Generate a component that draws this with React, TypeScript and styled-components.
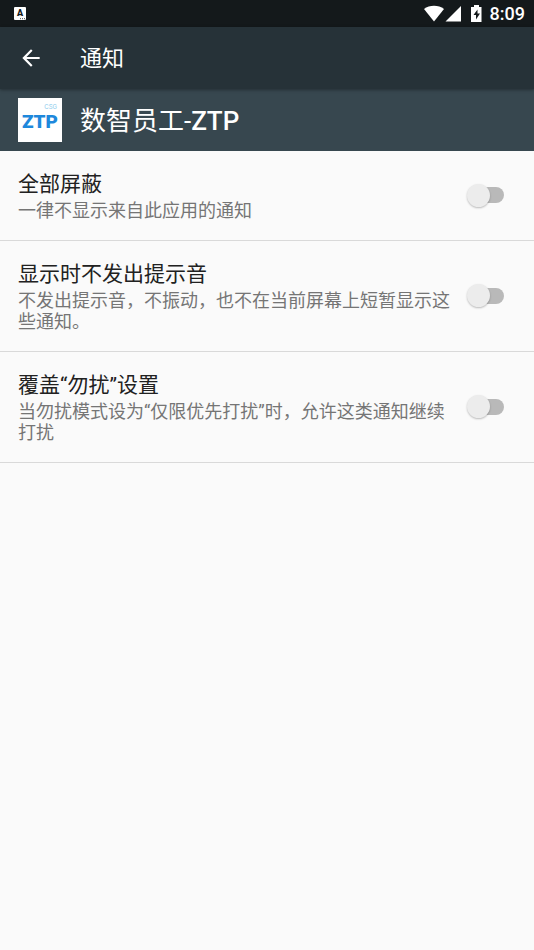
import React from "react";
import styled, { createGlobalStyle } from "styled-components";

const Global = createGlobalStyle`
  * { box-sizing: border-box; }
  body { margin: 0; background: #fafafa; font-family: Roboto, "Noto Sans CJK SC", sans-serif; color: #212121; }
`;
const Screen = styled.div`
  min-height: 100vh;
  display: flex;
  flex-direction: column;
`;
const StatusBar = styled.div`
  height: 27px;
  padding: 0 9px 0 14px;
  background: #14191b;
  color: #fff;
  display: flex;
  align-items: center;
  justify-content: space-between;
`;
const StatusIcons = styled.div`
  display: flex;
  align-items: center;
  gap: 8px;
`;
const Clock = styled.span`
  font-family: Roboto, sans-serif;
  font-size: 18px;
  line-height: 24px;
  font-weight: 500;
`;
const AppBar = styled.header`
  height: 62px;
  padding: 0 18px;
  background: #263238;
  color: #fff;
  display: flex;
  align-items: center;
  gap: 36px;
  box-shadow: 0 1px 3px rgba(0, 0, 0, 0.35);
  z-index: 1;
`;
const BackButton = styled.button`
  width: 26px;
  height: 26px;
  padding: 0;
  border: 0;
  background: none;
  color: inherit;
  display: flex;
`;
const Title = styled.h1`
  margin: 0;
  padding-top: 2px;
  font-size: 22px;
  line-height: 32px;
  font-weight: 400;
`;
const AppHeader = styled.section`
  padding: 9px 18px;
  background: #37474f;
  color: #fff;
  display: flex;
  align-items: center;
  gap: 18px;
`;
const AppName = styled.h2`
  margin: 0;
  padding-top: 2px;
  font-size: 26px;
  line-height: 36px;
  font-weight: 400;
`;
const Latin = styled.span`
  font-weight: 500;
`;
const Row = styled.label`
  padding: 18px 30px 19px 18px;
  border-bottom: 1px solid #d9d9d9;
  display: flex;
  align-items: center;
  gap: 16px;
`;
const Texts = styled.span`
  flex: 1;
  min-width: 0;
  display: flex;
  flex-direction: column;
`;
const Name = styled.span`
  font-size: 21px;
  line-height: 31px;
`;
const Summary = styled.span`
  font-size: 18px;
  line-height: 21px;
  color: #757575;
`;
const Switch = styled.input`
  appearance: none;
  flex: none;
  width: 37px;
  height: 24px;
  margin: 0;
  display: flex;
  align-items: center;
  position: relative;
  &::before {
    content: "";
    position: absolute;
    inset: 4px 0 4px 4px;
    border-radius: 8px;
    background: #b9b9b9;
  }
  &::after {
    content: "";
    position: relative;
    width: 23px;
    height: 23px;
    border-radius: 50%;
    background: #ececec;
    box-shadow: 0 1px 2px rgba(0, 0, 0, 0.25);
  }
  &:checked::after { margin-left: auto; }
`;

const settings = [
  { name: "全部屏蔽", summary: "一律不显示来自此应用的通知" },
  { name: "显示时不发出提示音", summary: "不发出提示音，不振动，也不在当前屏幕上短暂显示这些通知。" },
  { name: "覆盖“勿扰”设置", summary: "当勿扰模式设为“仅限优先打扰”时，允许这类通知继续打扰" },
];

const InputIcon = () => (
  <svg width="12" height="13" viewBox="0 0 12 13">
    <rect width="12" height="13" rx="1" fill="#fff" />
    <text x="6" y="9" textAnchor="middle" fontFamily="Roboto, sans-serif" fontSize="9" fontWeight="900" fill="#14191b">A</text>
    <path d="M6 11.700h1M8 11.700h1M10 11.700h1" stroke="#14191b" strokeWidth="0.800" />
  </svg>
);

const SignalIcons = () => (
  <svg width="58" height="18" viewBox="0 0 58 18" fill="#fff">
    <path d="M0 4C5.500-.3 14.500-.3 20 4L10 16.500Z" />
    <path d="M21.500 16.500 37 1V16.500Z" />
    <path fillRule="evenodd" d="M47 2H50V0h5v2h2.500v15H47ZM53.500 4.500 49.500 10H52V14.500L56 8.500H53.500Z" />
  </svg>
);

const AppLogo = () => (
  <svg width="44" height="44" viewBox="0 0 44 44">
    <rect width="44" height="44" fill="#fff" />
    <text x="22" y="30" textAnchor="middle" fontFamily="Roboto, sans-serif" fontSize="19" fontWeight="900" fill="#1e88dc">ZTP</text>
    <text x="39" y="11" textAnchor="end" fontFamily="Inter, sans-serif" fontSize="6" fill="#8ccbed">CSG</text>
  </svg>
);

export default function App() {
  return (
    <Screen>
      <Global />
      <StatusBar>
        <InputIcon />
        <StatusIcons>
          <SignalIcons />
          <Clock>8:09</Clock>
        </StatusIcons>
      </StatusBar>
      <AppBar>
        <BackButton type="button" aria-label="返回">
          <svg width="26" height="26" viewBox="0 0 24 24" fill="currentColor"><path d="M20 11H7.800l5.600-5.600L12 4l-8 8 8 8 1.400-1.400L7.800 13H20z" /></svg>
        </BackButton>
        <Title>通知</Title>
      </AppBar>
      <AppHeader>
        <AppLogo />
        <AppName>数智员工-<Latin>ZTP</Latin></AppName>
      </AppHeader>
      <main>
        {settings.map((s) => (
          <Row key={s.name}>
            <Texts><Name>{s.name}</Name><Summary>{s.summary}</Summary></Texts>
            <Switch type="checkbox" role="switch" />
          </Row>
        ))}
      </main>
    </Screen>
  );
}
